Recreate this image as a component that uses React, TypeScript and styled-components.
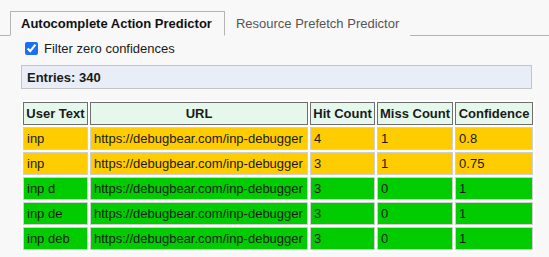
import React, { useState } from 'react';
import styled, { createGlobalStyle } from 'styled-components';

const GlobalStyle = createGlobalStyle`
  html, body {
    margin: 0;
    padding: 0;
    background: #f8f8f8;
    font-family: "Liberation Sans", Arial, sans-serif;
    font-size: 13px;
    color: #1a1a1a;
  }
`;

const Page = styled.div`
  padding-top: 11px;
`;

const TabBar = styled.div`
  display: flex;
  padding-left: 10px;
  border-bottom: 1px solid #b4b4b4;
`;

const Tab = styled.div<{ active?: boolean }>`
  height: 23px;
  padding: 0 ${p => (p.active ? 12 : 10)}px 0 10px;
  display: flex;
  align-items: center;
  margin-bottom: -1px;
  border: 1px solid ${p => (p.active ? '#b4b4b4' : 'transparent')};
  border-bottom: 1px solid ${p => (p.active ? '#f8f8f8' : 'transparent')};
  font-weight: ${p => (p.active ? 'bold' : 'normal')};
  color: ${p => (p.active ? '#111' : '#555')};
  background: #f8f8f8;
  cursor: pointer;
`;

const Panel = styled.div`
  padding: 4px 17px 0 21px;
`;

const FilterRow = styled.label`
  display: flex;
  align-items: center;
  height: 17px;
  gap: 6px;
`;

const Check = styled.input`
  margin: 0 0 0 4px;
  width: 13px;
  height: 13px;
  accent-color: #1c6ef2;
`;

const EntriesBox = styled.div`
  margin-top: 8px;
  height: 22px;
  display: flex;
  align-items: center;
  padding-left: 5px;
  background: #e8edf8;
  border: 1px solid #c4c4c4;
  font-weight: bold;
`;

const Table = styled.table`
  margin-top: 11px;
  background: #fff;
  border-spacing: 2px;
`;

const HeadCell = styled.th<{ w: number }>`
  width: ${p => p.w}px;
  min-width: ${p => p.w}px;
  box-sizing: border-box;
  height: 23px;
  padding: 0 2px;
  background: #e6f8ec;
  border: 1px solid #6e6e6e;
  font-weight: bold;
  text-align: center;
  white-space: nowrap;
`;

const Cell = styled.td<{ tone: 'yellow' | 'green' }>`
  height: 23px;
  box-sizing: border-box;
  padding: 0 3px;
  background: ${p => (p.tone === 'yellow' ? '#ffcc00' : '#00cc00')};
  border: 1px solid #cfcfcf;
  white-space: nowrap;
`;

const columns = [
  { label: 'User Text', w: 65 },
  { label: 'URL', w: 218 },
  { label: 'Hit Count', w: 65 },
  { label: 'Miss Count', w: 74 },
  { label: 'Confidence', w: 78 },
];

const rows = [
  { text: 'inp', hit: 4, miss: 1, conf: '0.8' },
  { text: 'inp', hit: 3, miss: 1, conf: '0.75' },
  { text: 'inp d', hit: 3, miss: 0, conf: '1' },
  { text: 'inp de', hit: 3, miss: 0, conf: '1' },
  { text: 'inp deb', hit: 3, miss: 0, conf: '1' },
];

const App: React.FC = () => {
  const [filter, setFilter] = useState(true);
  const [tab, setTab] = useState(0);

  return (
    <>
      <GlobalStyle />
      <Page>
        <TabBar>
          <Tab active={tab === 0} onClick={() => setTab(0)}>Autocomplete Action Predictor</Tab>
          <Tab active={tab === 1} onClick={() => setTab(1)}>Resource Prefetch Predictor</Tab>
        </TabBar>
        <Panel>
          <FilterRow>
            <Check type="checkbox" checked={filter} onChange={e => setFilter(e.target.checked)} />
            Filter zero confidences
          </FilterRow>
          <EntriesBox>Entries: 340</EntriesBox>
          <Table>
            <thead>
              <tr>
                {columns.map(c => (
                  <HeadCell key={c.label} w={c.w}>{c.label}</HeadCell>
                ))}
              </tr>
            </thead>
            <tbody>
              {rows.map((r, i) => {
                const tone = Number(r.conf) < 1 ? 'yellow' : 'green';
                return (
                  <tr key={i}>
                    <Cell tone={tone}>{r.text}</Cell>
                    <Cell tone={tone}>https://debugbear.com/inp-debugger</Cell>
                    <Cell tone={tone}>{r.hit}</Cell>
                    <Cell tone={tone}>{r.miss}</Cell>
                    <Cell tone={tone}>{r.conf}</Cell>
                  </tr>
                );
              })}
            </tbody>
          </Table>
        </Panel>
      </Page>
    </>
  );
};

export default App;
